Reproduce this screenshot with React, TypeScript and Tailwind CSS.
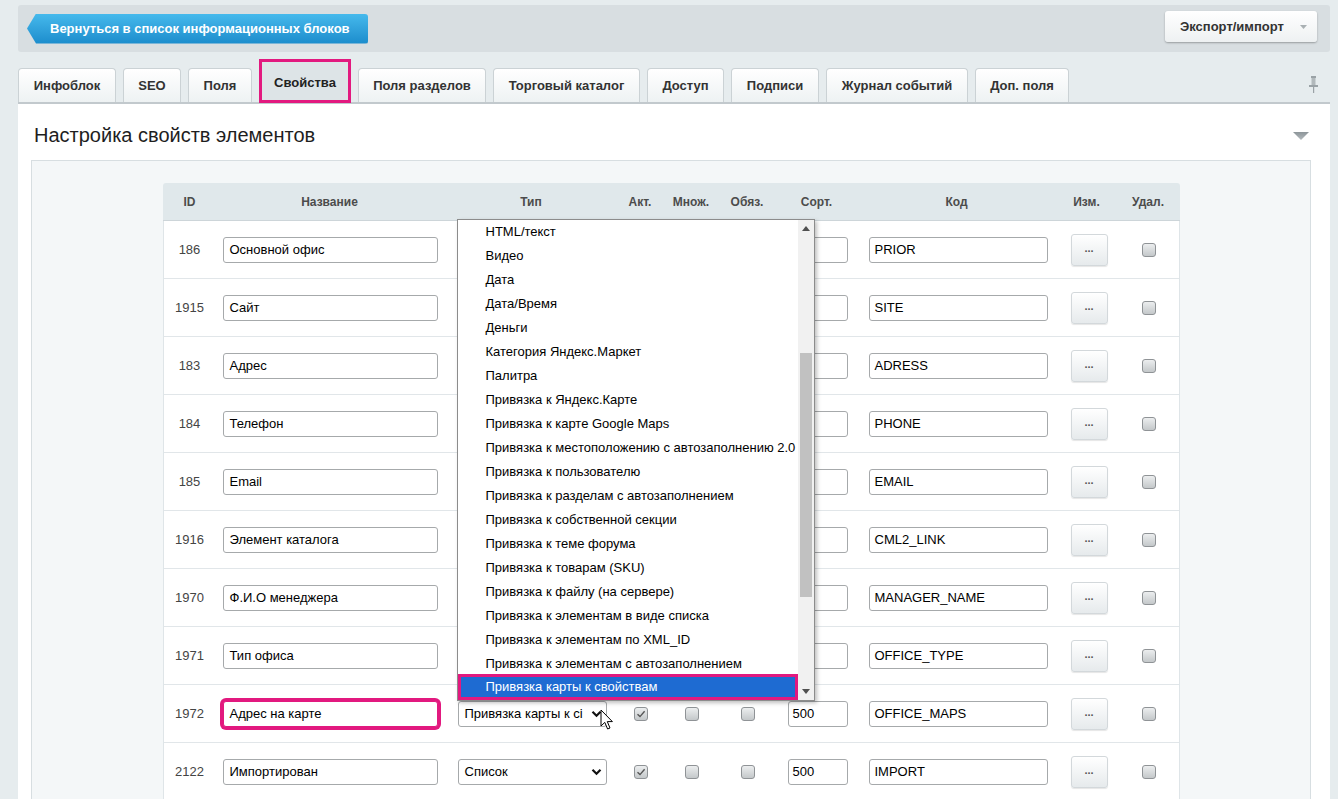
import React from 'react';

// rows 1-8 have their type select hidden behind the open dropdown
const rows = [
  { id: '186', name: 'Основной офис', type: '', code: 'PRIOR' },
  { id: '1915', name: 'Сайт', type: '', code: 'SITE' },
  { id: '183', name: 'Адрес', type: '', code: 'ADRESS' },
  { id: '184', name: 'Телефон', type: '', code: 'PHONE' },
  { id: '185', name: 'Email', type: '', code: 'EMAIL' },
  { id: '1916', name: 'Элемент каталога', type: '', code: 'CML2_LINK' },
  { id: '1970', name: 'Ф.И.О менеджера', type: '', code: 'MANAGER_NAME' },
  { id: '1971', name: 'Тип офиса', type: '', code: 'OFFICE_TYPE' },
  { id: '1972', name: 'Адрес на карте', type: 'Привязка карты к сі', code: 'OFFICE_MAPS', marked: true },
  { id: '2122', name: 'Импортирован', type: 'Список', code: 'IMPORT' },
];

const tabs = [
  { label: 'Инфоблок', w: 'w-[98px]' },
  { label: 'SEO', w: 'w-[58px]' },
  { label: 'Поля', w: 'w-[64px]' },
  { label: 'Свойства', w: 'w-[92px]', active: true },
  { label: 'Поля разделов', w: 'w-[128px]' },
  { label: 'Торговый каталог', w: 'w-[147px]' },
  { label: 'Доступ', w: 'w-[77px]' },
  { label: 'Подписи', w: 'w-[88px]' },
  { label: 'Журнал событий', w: 'w-[142px]' },
  { label: 'Доп. поля', w: 'w-[94px]' },
];

const types = [
  'HTML/текст',
  'Видео',
  'Дата',
  'Дата/Время',
  'Деньги',
  'Категория Яндекс.Маркет',
  'Палитра',
  'Привязка к Яндекс.Карте',
  'Привязка к карте Google Maps',
  'Привязка к местоположению с автозаполнению 2.0',
  'Привязка к пользователю',
  'Привязка к разделам с автозаполнением',
  'Привязка к собственной секции',
  'Привязка к теме форума',
  'Привязка к товарам (SKU)',
  'Привязка к файлу (на сервере)',
  'Привязка к элементам в виде списка',
  'Привязка к элементам по XML_ID',
  'Привязка к элементам с автозаполнением',
  'Привязка карты к свойствам',
];

const grid = 'grid grid-cols-[50px_234px_169px_49px_53px_59px_80px_200px_60px_63px] items-center';

const Checkbox = ({ checked = false }: { checked?: boolean }) => (
  <div className="w-[14px] h-[14px] rounded-[3px] border border-[#8f9396] bg-gradient-to-b from-[#eceeef] to-[#c4c8ca] flex items-center justify-center justify-self-center">
    {checked && (
      <svg width="10" height="10" viewBox="0 0 10 10">
        <path d="M1.5 5.2 L4 7.6 L8.6 2.2" fill="none" stroke="#555" strokeWidth="1.4" />
      </svg>
    )}
  </div>
);

const Chevron = () => (
  <svg width="11" height="8" viewBox="0 0 11 8">
    <path d="M1.5 1.8 L5.5 5.8 L9.5 1.8" fill="none" stroke="#111" strokeWidth="2.2" />
  </svg>
);

export default function App() {
  return (
    <div className="bg-[#e6ecee] pl-[18px] pr-[8px] pt-[5px] font-['Liberation_Sans',Arial,sans-serif] text-[13px] text-[#222] overflow-hidden h-[799px]">
      {/* toolbar */}
      <div className="h-[47px] rounded-[3px] bg-[#d8dee1] flex items-center justify-between pl-[9px] pr-[13px]">
        <div className="h-[30px] w-[341px] flex items-center pl-[23px] text-white font-bold text-[13px] bg-gradient-to-b from-[#45b9ec] to-[#1b8ccc] rounded-r-[3px] [clip-path:polygon(9px_0,100%_0,100%_100%,9px_100%,0_50%)] shadow-[0_1px_1px_rgba(0,0,0,0.2)]">
          Вернуться в список информационных блоков
        </div>
        <div className="h-[31px] w-[152px] mt-[-4px] rounded-[3px] bg-gradient-to-b from-white to-[#eef1f2] shadow-[0_1px_2px_rgba(0,0,0,0.3)] flex items-center pl-[15px] gap-[16px] font-bold text-[#333]">
          <span>Экспорт/импорт</span>
          <svg width="7" height="4" viewBox="0 0 7 4">
            <path d="M0 0 L7 0 L3.5 4 Z" fill="#a9b0b3" />
          </svg>
        </div>
      </div>

      {/* tabs */}
      <div className="mt-[7px] flex items-end justify-between">
        <div className="flex items-end gap-[7px]">
          {tabs.map((t) =>
            t.active ? (
              <div
                key={t.label}
                className={`${t.w} h-[44px] mb-[-1px] border-[3px] border-[#e2197f] bg-[#dde4e7] flex items-center justify-center pt-[3px] font-bold text-[#222] relative z-10`}
              >
                {t.label}
              </div>
            ) : (
              <div
                key={t.label}
                className={`${t.w} h-[34px] rounded-t-[4px] border border-b-0 border-[#cbd2d5] bg-gradient-to-b from-white to-[#eef2f3] flex items-center justify-center font-bold text-[#333]`}
              >
                {t.label}
              </div>
            )
          )}
        </div>
        <div className="mr-[12px] mb-[9px]">
          <svg width="9" height="17" viewBox="0 0 9 17">
            <rect x="2" y="0" width="5" height="2" fill="#9aa2a6" />
            <rect x="2.5" y="2" width="4" height="7" fill="#b2b9bc" />
            <rect x="0" y="9" width="9" height="2" fill="#9aa2a6" />
            <rect x="4" y="11" width="1.2" height="6" fill="#9aa2a6" />
          </svg>
        </div>
      </div>

      {/* main panel */}
      <div className="bg-white border-t-2 border-[#c2c9cd] h-[700px]">
        <div className="h-[56px] flex items-start justify-between pl-[16px] pr-[21px] pt-[19px]">
          <div className="text-[20px] leading-[24px] text-[#1e1e1e]">Настройка свойств элементов</div>
          <svg width="16" height="8" viewBox="0 0 16 8" className="mt-[9px]">
            <defs>
              <linearGradient id="tri" x1="0" y1="0" x2="0" y2="1">
                <stop offset="0" stopColor="#8d9599" />
                <stop offset="1" stopColor="#b3babd" />
              </linearGradient>
            </defs>
            <path d="M0 0 L16 0 L8 8 Z" fill="url(#tri)" />
          </svg>
        </div>

        <div className="ml-[13px] mr-[19px] border border-[#d7dee1] bg-[#f4f7f8] pt-[22px] h-[650px]">
          <div className="relative w-[1017px] mx-auto">
            {/* header */}
            <div className={`${grid} h-[38px] bg-[#e0e8eb] rounded-t-[3px] border-b border-[#cdd5d9] text-[12px] font-bold text-[#4c4c4c] text-center`}>
              <div className="pl-[4px]">ID</div>
              <div>Название</div>
              <div>Тип</div>
              <div>Акт.</div>
              <div>Множ.</div>
              <div>Обяз.</div>
              <div>Сорт.</div>
              <div>Код</div>
              <div>Изм.</div>
              <div>Удал.</div>
            </div>

            {/* rows */}
            <div className="bg-white border-l border-r border-[#dfe5e8]">
              {rows.map((r) => (
                <div key={r.id} className={`${grid} h-[58px] border-b border-[#e1e6e9]`}>
                  <div className="text-center text-[#444] pl-[2px]">{r.id}</div>
                  <div className="pl-[9px]">
                    <div
                      className={`w-[215px] h-[26px] rounded-[3px] border border-[#a6a9ab] bg-white flex items-center pl-[6px] text-black ${
                        r.marked ? 'shadow-[0_0_0_3px_#e2197f] border-[#e2197f]' : ''
                      }`}
                    >
                      {r.name}
                    </div>
                  </div>
                  <div className="pl-[10px]">
                    <div className="w-[149px] h-[26px] rounded-[3px] border border-[#a6a9ab] bg-white flex items-center justify-between pl-[6px] pr-[4px] text-black">
                      <span className="whitespace-nowrap">{r.type}</span>
                      <Chevron />
                    </div>
                  </div>
                  <Checkbox checked />
                  <Checkbox />
                  <Checkbox />
                  <div className="pl-[10px]">
                    <div className="w-[60px] h-[26px] rounded-[3px] border border-[#a6a9ab] bg-white flex items-center pl-[4px] text-black">
                      500
                    </div>
                  </div>
                  <div className="pl-[11px]">
                    <div className="w-[179px] h-[26px] rounded-[3px] border border-[#a6a9ab] bg-white flex items-center pl-[5px] text-black">
                      {r.code}
                    </div>
                  </div>
                  <div className="pl-[13px]">
                    <div className="w-[37px] h-[32px] rounded-[3px] border border-[#d3d8db] bg-gradient-to-b from-white to-[#e6eaec] shadow-[0_1px_1px_rgba(0,0,0,0.1)] flex items-center justify-center text-[11px] text-[#555] font-bold pb-[3px]">
                      ...
                    </div>
                  </div>
                  <Checkbox />
                </div>
              ))}
            </div>

            {/* open type dropdown */}
            <div className="absolute left-[294px] top-[36px] w-[358px] h-[482px] bg-white border border-[#8c8c8c] shadow-[2px_2px_4px_rgba(0,0,0,0.25)] flex z-20">
              <div className="flex-1 flex flex-col">
                {types.map((t, i) =>
                  i === types.length - 1 ? (
                    <div
                      key={t}
                      className="h-[26px] mt-[-2px] flex items-center pl-[28px] bg-[#1e6bd2] text-white whitespace-nowrap shadow-[inset_0_0_0_3px_#e2197f]"
                    >
                      {t}
                    </div>
                  ) : (
                    <div key={t} className="h-[24px] flex items-center pl-[28px] text-black whitespace-nowrap">
                      {t}
                    </div>
                  )
                )}
              </div>
              <div className="w-[16px] bg-[#f1f1f1] flex flex-col items-center">
                <div className="h-[17px] flex items-center justify-center">
                  <svg width="8" height="5" viewBox="0 0 8 5">
                    <path d="M0 5 L4 0 L8 5 Z" fill="#505050" />
                  </svg>
                </div>
                <div className="flex-1 w-full px-[2px]">
                  <div className="mt-[116px] h-[244px] bg-[#c1c1c1]" />
                </div>
                <div className="h-[17px] flex items-center justify-center">
                  <svg width="8" height="5" viewBox="0 0 8 5">
                    <path d="M0 0 L8 0 L4 5 Z" fill="#505050" />
                  </svg>
                </div>
              </div>
            </div>

            {/* mouse pointer */}
            <svg
              className="absolute left-[437px] top-[526px] z-30"
              width="14"
              height="22"
              viewBox="0 0 14 22"
            >
              <path
                d="M1 1 L1 17 L4.8 13.4 L7.6 20 L10 19 L7.3 12.6 L12.4 12.6 Z"
                fill="white"
                stroke="black"
                strokeWidth="1"
                strokeLinejoin="round"
              />
            </svg>
          </div>
        </div>
      </div>
    </div>
  );
}
